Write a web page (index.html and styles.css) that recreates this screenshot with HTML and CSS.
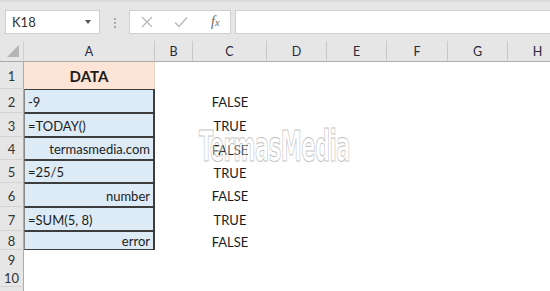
FILE: index.html
```html
<!DOCTYPE html>
<html lang="en">
<head>
  <meta charset="UTF-8">
  <meta name="viewport" content="width=device-width, initial-scale=1.0">
  <title>ISLOGICAL</title>
  <link rel="stylesheet" href="styles.css">
</head>
<body>
  <div class="toolbar">
    <div class="namebox">
      <span>K18</span>
      <span class="caret"></span>
    </div>
    <div class="grip"><i></i><i></i><i></i></div>
    <div class="fbuttons">
      <svg width="12" height="12" viewBox="0 0 12 12"><path d="M1 1 L11 11 M11 1 L1 11" stroke="#b9b9b9" stroke-width="1.3" fill="none"/></svg>
      <svg width="14" height="12" viewBox="0 0 14 12"><path d="M1 6.5 L5 10.5 L13 1.5" stroke="#b9b9b9" stroke-width="1.4" fill="none"/></svg>
      <span class="fx">f<small>x</small></span>
    </div>
    <div class="formula"></div>
  </div>

  <div class="sheet">
    <div class="row head">
      <div class="corner"><span class="tri"></span></div>
      <div class="ch">A</div><div class="ch">B</div><div class="ch">C</div><div class="ch">D</div>
      <div class="ch">E</div><div class="ch">F</div><div class="ch">G</div><div class="ch">H</div>
    </div>
    <div class="row h27">
      <div class="rh">1</div><div class="cell title">DATA</div><div></div><div></div>
    </div>
    <div class="row h24">
      <div class="rh">2</div><div class="cell data">-9</div><div></div><div class="val">FALSE</div>
    </div>
    <div class="row h24">
      <div class="rh">3</div><div class="cell data">=TODAY()</div><div></div><div class="val">TRUE</div>
    </div>
    <div class="row h23">
      <div class="rh">4</div><div class="cell data right">termasmedia.com</div><div></div><div class="val">FALSE</div>
    </div>
    <div class="row h23">
      <div class="rh">5</div><div class="cell data">=25/5</div><div></div><div class="val">TRUE</div>
    </div>
    <div class="row h24">
      <div class="rh">6</div><div class="cell data right">number</div><div></div><div class="val">FALSE</div>
    </div>
    <div class="row h24">
      <div class="rh">7</div><div class="cell data">=SUM(5, 8)</div><div></div><div class="val">TRUE</div>
    </div>
    <div class="row h19">
      <div class="rh">8</div><div class="cell data right">error</div><div></div><div class="val">FALSE</div>
    </div>
    <div class="row h18">
      <div class="rh">9</div>
    </div>
    <div class="row h19">
      <div class="rh">10</div>
    </div>
    <div class="row h18">
      <div class="rh"></div>
    </div>
  </div>

  <div class="watermark">TermasMedia</div>
</body>
</html>
```

FILE: styles.css
```css
body {
  margin: 0;
  width: 550px;
  height: 291px;
  overflow: hidden;
  background: #fff;
  font-family: Lato, "Open Sans", sans-serif;
  color: #1c1c1c;
  position: relative;
}

.toolbar {
  height: 41px;
  box-sizing: border-box;
  padding: 10px 0 0 5px;
  background: #e6e6e6;
  border-top: 2px solid #d9d9d9;
  display: flex;
  align-items: flex-start;
}

.namebox {
  width: 95px;
  height: 24px;
  box-sizing: border-box;
  margin-top: -2px;
  background: #fff;
  border: 1px solid #cfcfcf;
  display: flex;
  align-items: center;
  justify-content: space-between;
  padding: 0 8px 0 6px;
  font-size: 13px;
  color: #333;
}

.caret {
  width: 0;
  height: 0;
  border-left: 3px solid transparent;
  border-right: 3px solid transparent;
  border-top: 4px solid #555;
}

.grip {
  width: 29px;
  height: 22px;
  display: flex;
  flex-direction: column;
  align-items: center;
  justify-content: center;
  gap: 2px;
}

.grip i {
  width: 2px;
  height: 2px;
  background: #a8a8a8;
}

.fbuttons {
  width: 102px;
  height: 24px;
  box-sizing: border-box;
  margin-top: -2px;
  background: #fff;
  border: 1px solid #cfcfcf;
  display: flex;
  align-items: center;
  padding: 0 8px 0 11px;
  gap: 21px;
}

.fx {
  font-family: "Liberation Serif", serif;
  font-style: italic;
  font-size: 14px;
  color: #666;
  margin-left: 2px;
}

.fx small {
  font-size: 10px;
}

.formula {
  flex: 1;
  height: 24px;
  box-sizing: border-box;
  margin: -2px 0 0 4px;
  background: #fff;
  border: 1px solid #cfcfcf;
  border-right: none;
}

.sheet {
  display: flex;
  flex-direction: column;
}

.row {
  display: grid;
  grid-template-columns: 24px 131px 38px 74px 60px 60px 61px 60px 60px;
}

.head { height: 21px; }
.h27 { height: 27px; }
.h24 { height: 24px; }
.h23 { height: 23px; }
.h19 { height: 19px; }
.h18 { height: 18px; }

.corner,
.ch {
  background: #e6e6e6;
  border-bottom: 1px solid #ababab;
  border-right: 1px solid #c8c8c8;
  box-sizing: border-box;
}

.corner {
  position: relative;
  border-right-color: #d0d0d0;
}

.tri {
  position: absolute;
  right: 4px;
  bottom: 4px;
  width: 0;
  height: 0;
  border-left: 12px solid transparent;
  border-bottom: 12px solid #b4b4b4;
}

.ch {
  font-size: 12.5px;
  color: #2a2a3a;
  display: flex;
  align-items: center;
  justify-content: center;
  padding-top: 1px;
}

.rh {
  background: #e6e6e6;
  border-right: 1px solid #ababab;
  border-bottom: 1px solid #d4d4d4;
  box-sizing: border-box;
  font-size: 13px;
  color: #333;
  display: flex;
  align-items: center;
  justify-content: center;
  padding-top: 2px;
}

.cell {
  box-sizing: border-box;
  font-size: 13px;
  display: flex;
  align-items: center;
  padding: 1px 3px 0;
}

.title {
  background: #fce4d6;
  justify-content: center;
  font-size: 15px;
  font-weight: bold;
  border-right: 1px solid #e8d6ca;
}

.data {
  background: #ddebf7;
  border: 1px solid #3d3d3d;
  border-right-width: 2px;
  border-left-color: #8a8a8a;
}

.right {
  justify-content: flex-end;
}

.val {
  font-size: 13px;
  display: flex;
  align-items: center;
  justify-content: center;
  padding-top: 2px;
}

.watermark {
  position: absolute;
  left: 199px;
  top: 122px;
  font-family: "DejaVu Sans Condensed", "DejaVu Sans", sans-serif;
  font-size: 42px;
  font-weight: bold;
  letter-spacing: -1px;
  color: rgba(255, 255, 255, 0.45);
  -webkit-text-stroke: 1px rgba(150, 150, 150, 0.6);
  transform: scaleX(0.56);
  transform-origin: left top;
  white-space: nowrap;
}
```
